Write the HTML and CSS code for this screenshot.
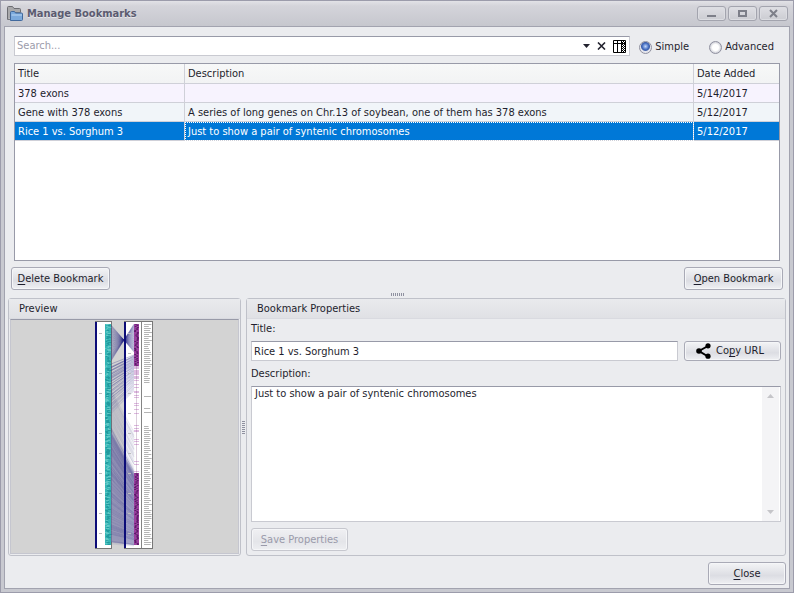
FILE: index.html
```
<!DOCTYPE html>
<html lang="en">
<head>
    <meta charset="UTF-8">
    <meta name="viewport" content="width=device-width, initial-scale=1.0">
    <title>Manage Bookmarks</title>
    <link rel="stylesheet" href="styles.css">
</head>
<body>
    <div class="window">
        <header class="titlebar">
            <svg class="app-icon" width="16" height="16" viewBox="0 0 16 16">
                <path d="M.5 13.5V1.5q0-1 1-1h4l1.500 2h5.500q1 0 1 1v3" fill="#a9a9ab" stroke="#6c6d72"/>
                <path d="M.5 13.500h3v-7h10" fill="none" stroke="#77787d"/>
                <path d="M3.500 14.500v-8q0-1 1-1h3l1 1.500h6q1 0 1 1v5.500q0 1-1 1z" fill="#7ba9dc" stroke="#41699d"/>
                <path d="M4.500 9h10.500" stroke="#b9d6f4"/>
            </svg>
            <h1>Manage Bookmarks</h1>
            <div class="window-buttons">
                <button type="button" aria-label="Minimize"><svg width="27" height="13" viewBox="0 0 27 13"><path d="M9 9h9" stroke="#7d7f89" stroke-width="2"/></svg></button>
                <button type="button" aria-label="Maximize"><svg width="27" height="13" viewBox="0 0 27 13"><path d="M10 4h7v5h-7z" fill="none" stroke="#7d7f89" stroke-width="2"/></svg></button>
                <button type="button" aria-label="Close window"><svg width="27" height="13" viewBox="0 0 27 13"><path d="M10 3l7 7M17 3l-7 7" stroke="#7d7f89" stroke-width="2"/></svg></button>
            </div>
        </header>

        <main class="content">
            <div class="search-row">
                <div class="search-box">
                    <input type="text" placeholder="Search..." aria-label="Search">
                    <button type="button" aria-label="Search history"><svg width="7" height="4" viewBox="0 0 7 4"><path d="M0 0h7L3.500 4z" fill="#22222e"/></svg></button>
                    <button type="button" aria-label="Clear"><svg width="9" height="8" viewBox="0 0 9 8"><path d="M1 .5l7 7M8 .5l-7 7" stroke="#22222e" stroke-width="1.600"/></svg></button>
                    <button type="button" aria-label="Choose columns">
                        <svg width="13" height="13" viewBox="0 0 13 13">
                            <path d="M.5.5h12v12H.5zM.5 3.500h12M4.500 1v11M8.500 1v11" fill="none" stroke="#000"/>
                            <path d="M9 2.500h4M9 4.500h4M9 6.500h4M9 8.500h4M9 10.500h4" stroke="#000" stroke-dasharray="1 1"/>
                            <path d="M10.500 1v12" stroke="#000" stroke-dasharray="1 1"/>
                        </svg>
                    </button>
                </div>
                <label class="radio"><input type="radio" name="mode" checked>Simple</label>
                <label class="radio"><input type="radio" name="mode">Advanced</label>
            </div>

            <div class="grid">
                <table>
                    <colgroup>
                        <col class="col-title">
                        <col>
                        <col class="col-date">
                    </colgroup>
                    <thead>
                        <tr><th>Title</th><th>Description</th><th>Date Added</th></tr>
                    </thead>
                    <tbody>
                        <tr class="alt"><td>378 exons</td><td></td><td>5/14/2017</td></tr>
                        <tr><td>Gene with 378 exons</td><td>A series of long genes on Chr.13 of soybean, one of them has 378 exons</td><td>5/12/2017</td></tr>
                        <tr class="selected"><td>Rice 1 vs. Sorghum 3</td><td class="focused">Just to show a pair of syntenic chromosomes</td><td>5/12/2017</td></tr>
                    </tbody>
                </table>
            </div>

            <div class="grid-actions">
                <button type="button" class="btn"><span><u>D</u>elete Bookmark</span></button>
                <button type="button" class="btn"><span><u>O</u>pen Bookmark</span></button>
            </div>

            <div class="splitter-h"><i></i></div>

            <div class="details">
                <section class="group preview">
                    <h2>Preview</h2>
                    <div class="preview-image">
                        <svg id="synteny" width="60" height="229" viewBox="1 0 60 229"></svg>
                    </div>
                </section>
                <div class="splitter-v"><i></i></div>
                <section class="group properties">
                    <h2>Bookmark Properties</h2>
                    <div class="form">
                        <label for="title">Title:</label>
                        <div class="title-row">
                            <input type="text" id="title" value="Rice 1 vs. Sorghum 3">
                            <button type="button" class="btn copy">
                                <svg width="16" height="16" viewBox="0 0 16 16">
                                    <path d="M12 3L3 8l9 5.500" fill="none" stroke="#000" stroke-width="2"/>
                                    <circle cx="12" cy="2.800" r="2.600"/>
                                    <circle cx="3" cy="8" r="2.800"/>
                                    <circle cx="12" cy="13.200" r="2.600"/>
                                </svg>
                                <span>Co<u>p</u>y URL</span>
                            </button>
                        </div>
                        <label for="description">Description:</label>
                        <div class="memo">
                            <textarea id="description">Just to show a pair of syntenic chromosomes</textarea>
                            <div class="scrollbar">
                                <svg width="7" height="4" viewBox="0 0 7 4"><path d="M0 4h7L3.500 0z" fill="#c5c5c9"/></svg>
                                <svg width="7" height="4" viewBox="0 0 7 4"><path d="M0 0h7L3.500 4z" fill="#c5c5c9"/></svg>
                            </div>
                        </div>
                        <button type="button" class="btn save" disabled><span><u>S</u>ave Properties</span></button>
                    </div>
                </section>
            </div>

            <div class="footer">
                <button type="button" class="btn close"><span><u>C</u>lose</span></button>
            </div>
        </main>
    </div>
    <script src="synteny.js"></script>
</body>
</html>
```
FILE: styles.css
```
:root {
    --frame: #c8c9d0;
    --frame-dark: #9c9cab;
    --face: #ebecef;
    --edge: #bfc1c9;
    --edge-dark: #989aa8;
    --text: #1e1e2d;
    --select: #0078d7;
}

* {
    box-sizing: border-box;
}

body {
    margin: 0;
    font-family: 'DejaVu Sans Condensed', 'DejaVu Sans', sans-serif;
    font-size: 11px;
    line-height: 14px;
    color: var(--text);
}

button, input, textarea {
    font: inherit;
    color: inherit;
}

.window {
    display: flex;
    flex-direction: column;
    min-height: 100vh;
    padding: 0 3px 3px;
    border: 1px solid var(--frame-dark);
    background: var(--frame);
}

.titlebar {
    display: flex;
    align-items: center;
    height: 25px;
    margin: 0 -3px;
    padding: 0 5px 0 6px;
    background: linear-gradient(#e2e2e6, #d4d4da 20%, #c6c7ce);
}

.titlebar h1 {
    flex: 1;
    margin: 0 0 0 4px;
    font-size: 11px;
    font-weight: bold;
    color: #5b5b70;
    text-shadow: 0 1px 0 #e6e6ea;
}

.window-buttons {
    display: flex;
    gap: 2px;
}

.window-buttons button {
    display: flex;
    height: 15px;
    padding: 0;
    border: 1px solid #a3a4ae;
    border-radius: 3px;
    background: linear-gradient(#dfdfe4, #cbccd2);
    box-shadow: inset 0 0 0 1px #dcdde2;
}

.content {
    flex: 1;
    display: flex;
    flex-direction: column;
    padding: 9px 3px 3px;
    border: 1px solid #a2a3af;
    background: var(--face);
}

/* search */

.search-row {
    display: flex;
    align-items: center;
    margin: 0 6px 7px;
}

.search-box {
    flex: 1;
    display: flex;
    align-items: center;
    height: 20px;
    margin-right: 9px;
    padding-right: 3px;
    border: 1px solid #c9cad1;
    border-top-color: var(--edge-dark);
    background: #fff;
}

.search-box input {
    flex: 1;
    min-width: 0;
    padding: 0 2px;
    border: 0;
    outline: 0;
    background: none;
}

.search-box input::placeholder {
    color: #9c9cab;
    opacity: 1;
}

.search-box button {
    display: flex;
    margin-left: 7px;
    padding: 0;
    border: 0;
    background: none;
}

.radio {
    display: flex;
    align-items: center;
    gap: 3px;
    padding-top: 2px;
}

.radio + .radio {
    margin: 0 6px 0 20px;
}

.radio input {
    appearance: none;
    width: 13px;
    height: 13px;
    margin: 0;
    border: 1px solid #9091a0;
    border-radius: 50%;
    background: radial-gradient(circle, #fff 3px, #c9cad3 6px);
}

.radio input:checked {
    background: radial-gradient(circle at 50% 40%, #c3d8fa 0, #4a72c4 3px, #3c5ea8 4px, #e4e5ec 5px);
}

/* bookmarks table */

.grid {
    flex: 1;
    margin: 0 6px;
    border: 1px solid var(--edge-dark);
    background: #fff;
}

.grid table {
    width: 100%;
    table-layout: fixed;
    border-collapse: separate;
    border-spacing: 0;
}

.col-title {
    width: 170px;
}

.col-date {
    width: 85px;
}

.grid th,
.grid td {
    height: 19px;
    padding: 2px 3px 0;
    border-right: 1px solid #cfd0d8;
    border-bottom: 1px solid #cfd0d8;
    font-weight: normal;
    text-align: left;
    white-space: nowrap;
    overflow: hidden;
}

.grid th {
    height: 20px;
    padding-top: 0;
    background: linear-gradient(#f7f8f8, #f2f3f4);
}

.grid th:last-child,
.grid td:last-child {
    border-right: 0;
}

.grid td {
    background: #f1f5f9;
}

.grid .alt td {
    background: #f7f3fe;
}

.grid .selected td {
    background: var(--select);
    color: #fff;
}

.grid .focused {
    outline: 1px dotted #fff;
    outline-offset: -1px;
}

/* buttons */

.btn {
    display: flex;
    align-items: center;
    justify-content: center;
    height: 23px;
    padding: 0 6px;
    border: 1px solid #a9aab6;
    border-radius: 3px;
    background: linear-gradient(#f3f4f6, #dcdde3 60%, #eff0f3);
    box-shadow: inset 0 0 0 1px #f5f6f8;
    white-space: nowrap;
}

.btn u {
    text-underline-offset: 2px;
}

.btn:disabled {
    color: #9a9aaa;
    border-color: #c6c7ce;
    background: linear-gradient(#f0f0f3, #e4e5e9 60%, #eeeff2);
}

.grid-actions {
    display: flex;
    justify-content: space-between;
    margin: 6px 3px 0;
}

.grid-actions .btn {
    width: 99px;
}

.splitter-h {
    display: flex;
    align-items: center;
    justify-content: center;
    height: 8px;
}

.splitter-h i {
    width: 13px;
    height: 3px;
    background: repeating-linear-gradient(90deg, #8f91a0 0 1px, transparent 1px 2px);
}

.splitter-v {
    display: flex;
    align-items: center;
    justify-content: center;
    width: 5px;
}

.splitter-v i {
    width: 3px;
    height: 13px;
    background: repeating-linear-gradient(#8f91a0 0 1px, transparent 1px 2px);
}

/* lower half */

.details {
    display: flex;
}

.group {
    display: flex;
    flex-direction: column;
    border: 1px solid var(--edge);
    border-radius: 3px;
}

.group h2 {
    margin: 0;
    padding: 3px 10px 2px;
    border-bottom: 1px solid #d9dae0;
    background: linear-gradient(#e9eaed, #e0e1e5);
    font-size: 11px;
    font-weight: normal;
}

.preview {
    width: 233px;
}

.preview-image {
    flex: 1;
    display: flex;
    justify-content: center;
    margin: 0 1px 1px;
    border: 1px solid #c5c6cf;
    border-top-color: var(--edge-dark);
    background: #d3d3d3;
}

.properties {
    flex: 1;
    min-width: 0;
}

.form {
    display: flex;
    flex-direction: column;
    padding: 3px 4px 4px;
}

.title-row {
    display: flex;
    gap: 6px;
    margin: 5px 0 6px;
}

.title-row input {
    flex: 1;
    min-width: 0;
    height: 20px;
    padding: 0 2px;
    border: 1px solid #c9cad1;
    border-top-color: var(--edge-dark);
    background: #fff;
}

.copy {
    gap: 4px;
    justify-content: flex-start;
    width: 97px;
    height: 20px;
    padding-left: 11px;
}

.memo {
    display: flex;
    height: 136px;
    margin: 5px 0 6px;
    border: 1px solid #c9cad1;
    border-top-color: var(--edge-dark);
    background: #fff;
}

.memo textarea {
    flex: 1;
    min-width: 0;
    padding: 0 3px;
    border: 0;
    outline: 0;
    resize: none;
    overflow: hidden;
}

.scrollbar {
    display: flex;
    flex-direction: column;
    align-items: center;
    justify-content: space-between;
    width: 17px;
    padding: 7px 0;
    margin-right: 1px;
    background: #f4f4f6;
}

.save {
    align-self: flex-start;
    width: 97px;
}

.footer {
    display: flex;
    justify-content: flex-end;
    margin-top: 6px;
}

.close {
    width: 78px;
}
```
FILE: synteny.js
```
// Draws the two chromosomes and the ribbons between them
const svg = document.getElementById('synteny');
let seed = 7;

function random() {
    seed = (seed * 16807) % 2147483647;
    return seed / 2147483647;
}

function add(tag, attrs) {
    const el = document.createElementNS('http://www.w3.org/2000/svg', tag);
    for (const name in attrs) {
        el.setAttribute(name, attrs[name]);
    }
    svg.appendChild(el);
}

function rect(x, y, width, height, fill, opacity = 1) {
    add('rect', { x, y, width, height, fill, opacity });
}

function line(x1, y1, x2, y2, stroke, opacity, width = 0.5) {
    add('line', { x1, y1, x2, y2, stroke, opacity, 'stroke-width': width });
}

// chromosome bodies
rect(1, 1, 17, 228, '#777');
rect(1, 2, 16, 226, '#fff');
rect(30, 1, 29, 228, '#777');
rect(30, 2, 28, 226, '#fff');

// ribbons
for (let i = 0; i < 40; i++) {
    const t = i / 39;
    line(17, 5 + t * 36, 30, 20, '#2b2b86', 0.5);
    line(30, 20, 40, 4 + t * 28, '#2b2b86', 0.5);
}
for (let i = 0; i < 50; i++) {
    const t = i / 49;
    line(17, 44 + t * 48 + random() * 3, 40, 35 + t * 36, '#3c3c8c', 0.65 - t * 0.45);
}
for (let i = 0; i < 50; i++) {
    const t = i / 49;
    line(17, 70 + t * 45, 40, 110 + t * 45 + random() * 5, '#50508c', 0.15);
}
add('path', { d: 'M17 112L40 153V225L17 222z', fill: '#8080b0', opacity: 0.6 });
for (let i = 0; i < 120; i++) {
    const t = i / 119;
    line(17, 108 + t * 116, 40, 152 + t * 74, '#2f2f80', 0.1 + random() * 0.4);
}

// gene tracks
rect(11, 4, 6, 221, '#35b5b5');
for (let y = 4; y < 225; y += 1) {
    rect(11 + random() * 3, y, 1 + random() * 3, 1, random() > 0.5 ? '#16888f' : '#7fd5d2', 0.6);
    const dense = y < 46 || y > 152;
    if (dense || random() < Math.max(0.15, 1 - (y - 46) / 40)) {
        rect(40, y, 5, 1, dense ? '#8f2a95' : '#c98fcd', dense ? 0.9 : 0.6);
    }
    if (dense) {
        rect(40 + random() * 3, y, 2, 1, '#4a0a58', 0.7);
    }
}
line(42.5, 4, 42.5, 225, '#8a5c8c', 0.6);
line(47.5, 2, 47.5, 228, '#777', 0.9, 1);

// labels and ticks
for (let y = 4; y < 226; y += 2) {
    if (y < 64 || y > 105 || y === 76 || y === 88 || y === 92) {
        rect(50, y, 4 + random() * 4, 1, '#777', 0.55);
    }
}
for (let y = 13; y < 225; y += 20) {
    rect(5, y, 3, 1, '#bbb');
    rect(34, y, 3, 1, '#bbb');
}
rect(1, 2, 2, 226, '#0c0c78');
rect(30, 2, 2, 226, '#0c0c78');
```
